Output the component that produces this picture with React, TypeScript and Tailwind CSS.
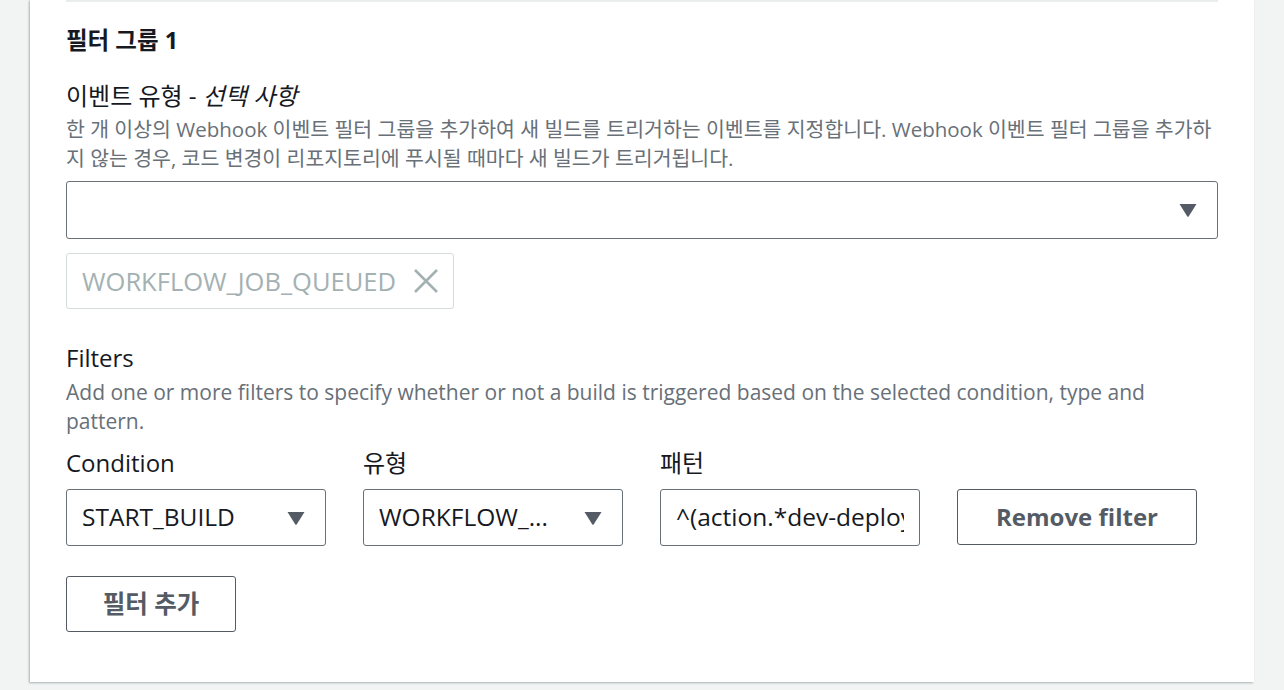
const font = { fontFamily: '"Open Sans", "Noto Sans CJK KR", sans-serif' };

const Caret = () => (
  <svg width={18} height={14} viewBox="0 0 18 14" className="shrink-0">
    <path d="M0.5 1 H17.5 L9.8 13.2 Q9 14.2 8.2 13.2 Z" fill="#545b64" />
  </svg>
);

const filters = [
  { label: "Condition", value: "START_BUILD", select: true },
  { label: "유형", value: "WORKFLOW_...", select: true },
  { label: "패턴", value: "^(action.*dev-deploy", select: false },
];

export default function App() {
  return (
    <div className="min-h-[690px] bg-[#f2f3f3] px-[30px] overflow-hidden" style={font}>
      <div className="bg-white w-[1224px] h-[682px] shadow-[-1px_1px_2px_rgba(0,28,36,0.3)] px-[36px]">
        <div className="h-[2px] bg-[#eaeded]" />

        <h3 className="mt-[23px] text-[23.5px] leading-[30px] font-bold text-[#16191f]">필터 그룹 1</h3>

        <div className="mt-[26px] text-[24px] leading-[30px] text-[#16191f]">
          이벤트 유형 - <i>선택 사항</i>
        </div>
        <p className="mt-[4px] text-[20.5px] leading-[29px] text-[#687078] whitespace-nowrap">
          한 개 이상의 Webhook 이벤트 필터 그룹을 추가하여 새 빌드를 트리거하는 이벤트를 지정합니다. Webhook 이벤트 필터 그룹을 추가하
          <br />지 않는 경우, 코드 변경이 리포지토리에 푸시될 때마다 새 빌드가 트리거됩니다.
        </p>

        <div className="mt-[8px] h-[58px] border border-[#687078] rounded-[3px] flex items-center justify-end pr-[20px]">
          <Caret />
        </div>

        <div className="mt-[14px] w-[388px] h-[56px] border border-[#d5dbdb] rounded-[3px] flex items-center justify-between pl-[15px] pr-[15px]">
          <span className="text-[25.5px] text-[#a4b1b2]">WORKFLOW_JOB_QUEUED</span>
          <svg width={24} height={24} viewBox="0 0 24 24">
            <path d="M1 1 L23 23 M23 1 L1 23" stroke="#a4b1b2" strokeWidth={2.6} />
          </svg>
        </div>

        <div className="mt-[34px] text-[24px] leading-[30px] text-[#16191f]">Filters</div>
        <p className="mt-[5px] text-[21px] leading-[29px] text-[#687078] whitespace-nowrap">
          Add one or more filters to specify whether or not a build is triggered based on the selected condition, type and
          <br />pattern.
        </p>

        <div className="mt-[12px] flex gap-[37px]">
          {filters.map((f) => (
            <div key={f.label} className="w-[260px]">
              <div className="text-[24px] leading-[30px] text-[#16191f] mb-[11px]">{f.label}</div>
              <div className="h-[57px] border border-[#687078] rounded-[3px] flex items-center justify-between gap-[12px] pl-[15px] pr-[15px]">
                <span className="flex-1 overflow-hidden text-[24.5px] text-[#16191f] whitespace-nowrap">{f.value}</span>
                {f.select && <span className="pr-[5px]"><Caret /></span>}
              </div>
            </div>
          ))}
          <button className="mt-[41px] w-[240px] h-[56px] border border-[#545b64] rounded-[3px] text-[24px] font-bold text-[#545b64]">
            Remove filter
          </button>
        </div>

        <button className="mt-[30px] w-[170px] h-[56px] border border-[#545b64] rounded-[3px] text-[24.5px] font-bold text-[#545b64]">
          필터 추가
        </button>
      </div>
    </div>
  );
}
